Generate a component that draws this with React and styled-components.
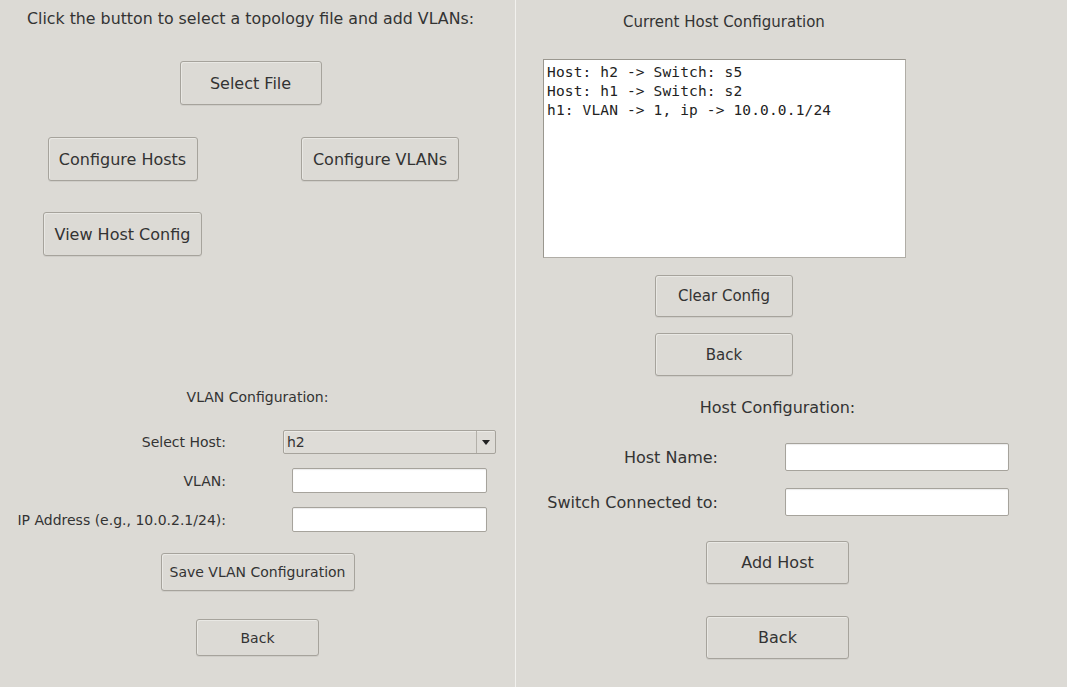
import React from "react";
import styled, { createGlobalStyle } from "styled-components";

const Global = createGlobalStyle`
  html, body { margin: 0; padding: 0; background: #dcdad5; }
  body { font-family: "DejaVu Sans", "Liberation Sans", sans-serif; color: #333; }
  * { box-sizing: border-box; }
`;

const Window = styled.div`
  display: grid;
  grid-template-columns: 515px 1px 1fr;
  width: 1067px;
  height: 687px;
  background: #dcdad5;
  overflow: hidden;
`;

const Divider = styled.div`
  background: #f2f1ee;
`;

const Panel = styled.div`
  display: flex;
  flex-direction: column;
`;

const Title = styled.div`
  font-size: ${(p) => p.$size || 16}px;
  line-height: ${(p) => Math.round(p.$size || 16) + 3}px;
  color: #333;
  white-space: nowrap;
  text-align: center;
`;

const Button = styled.button`
  font-family: "DejaVu Sans", "Liberation Sans", sans-serif;
  font-size: ${(p) => p.$size || 16}px;
  color: #333;
  width: ${(p) => p.$w}px;
  height: ${(p) => p.$h || 44}px;
  padding: 0;
  background: #dcdad5;
  border: 1px solid #a6a39c;
  border-radius: 3px;
  box-shadow: inset 1px 1px 0 #e9e8e4, 0 1px 0 rgba(0, 0, 0, 0.06);
  white-space: nowrap;
  cursor: default;
`;

/* ---------- left top ---------- */
const HeadBlock = styled.div`
  width: 501px;
  display: flex;
  flex-direction: column;
  align-items: center;
  padding-top: 9px;
  gap: 33px;
`;

const ButtonGrid = styled.div`
  display: grid;
  grid-template-columns: 245px 270px;
  justify-items: center;
  row-gap: 31px;
  margin-top: 32px;
`;

/* ---------- left bottom ---------- */
const VlanSection = styled.div`
  display: flex;
  flex-direction: column;
  align-items: center;
  margin-top: 133px;
`;

const VlanForm = styled.div`
  display: grid;
  grid-template-columns: 206px 213px;
  column-gap: 57px;
  row-gap: 14px;
  align-items: center;
  justify-items: end;
  margin-top: 24px;
  margin-left: 1px;
`;

const Label = styled.label`
  font-size: ${(p) => p.$size || 14}px;
  color: #333;
  white-space: nowrap;
  justify-self: end;
`;

const Entry = styled.input`
  width: ${(p) => p.$w}px;
  height: ${(p) => p.$h}px;
  background: #fff;
  border: 1px solid #a6a39c;
  border-radius: 2px;
  box-shadow: inset 0 1px 1px rgba(0, 0, 0, 0.08);
  justify-self: center;
  outline: none;
`;

const Combo = styled.div`
  width: 213px;
  height: 24px;
  display: flex;
  align-items: stretch;
  border: 1px solid #a6a39c;
  border-radius: 2px;
  background: #dedcd7;
  box-shadow: inset 1px 1px 0 #ebeae6;
`;

const ComboText = styled.span`
  flex: 1;
  font-size: 14px;
  line-height: 22px;
  padding-left: 3px;
  color: #333;
`;

const ComboArrow = styled.span`
  width: 19px;
  border-left: 1px solid #b3b0a9;
  display: flex;
  align-items: center;
  justify-content: center;
`;

const Triangle = styled.span`
  width: 0;
  height: 0;
  border-left: 4px solid transparent;
  border-right: 4px solid transparent;
  border-top: 5px solid #222;
`;

const SaveRow = styled.div`
  margin-top: 21px;
`;

const BackRow = styled.div`
  margin-top: ${(p) => p.$gap}px;
`;

/* ---------- right top ---------- */
const ViewerBlock = styled.div`
  width: 416px;
  display: flex;
  flex-direction: column;
  align-items: center;
  padding-top: 13px;
`;

const ConfigBox = styled.pre`
  margin: 28px 0 0 1px;
  width: 363px;
  height: 199px;
  background: #fff;
  border: 1px solid #b0ada6;
  border-top-color: #9a978f;
  border-left-color: #9a978f;
  padding: 3px 3px;
  font-family: "DejaVu Sans Mono", "Liberation Mono", monospace;
  font-size: 14.5px;
  letter-spacing: 0.15px;
  line-height: 19px;
  color: #222;
  overflow: hidden;
`;

const ViewerButtons = styled.div`
  display: flex;
  flex-direction: column;
  align-items: center;
  gap: 16px;
  margin-top: 17px;
`;

/* ---------- right bottom ---------- */
const HostSection = styled.div`
  display: flex;
  flex-direction: column;
  align-items: center;
  padding-right: 28px;
  margin-top: 22px;
`;

const HostForm = styled.div`
  display: grid;
  grid-template-columns: 172px 224px;
  column-gap: 67px;
  row-gap: 17px;
  align-items: center;
  margin-top: 26px;
`;

const AddRow = styled.div`
  margin-top: 25px;
`;

export default function App() {
  return (
    <>
      <Global />
      <Window>
        <Panel>
          <HeadBlock>
            <Title $size={15.8}>Click the button to select a topology file and add VLANs:</Title>
            <Button $w={142}>Select File</Button>
          </HeadBlock>
          <ButtonGrid>
            <Button $w={150}>Configure Hosts</Button>
            <Button $w={158}>Configure VLANs</Button>
            <Button $w={159}>View Host Config</Button>
          </ButtonGrid>

          <VlanSection>
            <Title $size={14}>VLAN Configuration:</Title>
            <VlanForm>
              <Label>Select Host:</Label>
              <Combo>
                <ComboText>h2</ComboText>
                <ComboArrow>
                  <Triangle />
                </ComboArrow>
              </Combo>
              <Label>VLAN:</Label>
              <Entry $w={195} $h={25} />
              <Label>IP Address (e.g., 10.0.2.1/24):</Label>
              <Entry $w={195} $h={25} />
            </VlanForm>
            <SaveRow>
              <Button $w={194} $h={38} $size={14}>Save VLAN Configuration</Button>
            </SaveRow>
            <BackRow $gap={28}>
              <Button $w={123} $h={37} $size={14}>Back</Button>
            </BackRow>
          </VlanSection>
        </Panel>

        <Divider />

        <Panel>
          <ViewerBlock>
            <Title $size={15}>Current Host Configuration</Title>
            <ConfigBox>{`Host: h2 -> Switch: s5
Host: h1 -> Switch: s2
h1: VLAN -> 1, ip -> 10.0.0.1/24`}</ConfigBox>
            <ViewerButtons>
              <Button $w={138} $h={42} $size={15}>Clear Config</Button>
              <Button $w={138} $h={43} $size={15}>Back</Button>
            </ViewerButtons>
          </ViewerBlock>

          <HostSection>
            <Title>Host Configuration:</Title>
            <HostForm>
              <Label $size={16}>Host Name:</Label>
              <Entry $w={224} $h={28} />
              <Label $size={16}>Switch Connected to:</Label>
              <Entry $w={224} $h={28} />
            </HostForm>
            <AddRow>
              <Button $w={143} $h={43}>Add Host</Button>
            </AddRow>
            <BackRow $gap={32}>
              <Button $w={143} $h={43}>Back</Button>
            </BackRow>
          </HostSection>
        </Panel>
      </Window>
    </>
  );
}
